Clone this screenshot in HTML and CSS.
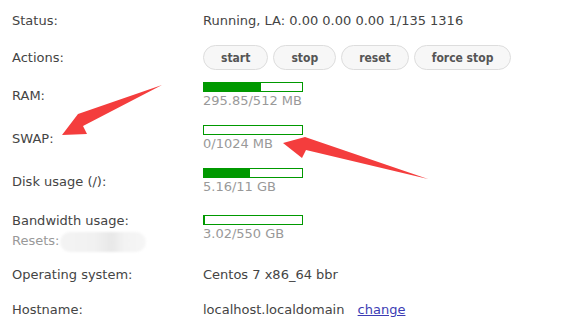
FILE: index.html
```html
<!DOCTYPE html>
<html lang="en">
<head>
    <meta charset="UTF-8">
    <title>VPS Info</title>
    <link rel="stylesheet" href="styles.css">
</head>
<body>
    <div class="info">
        <div class="row">
            <div class="label">Status:</div>
            <div class="value">Running, LA: 0.00 0.00 0.00 1/135 1316</div>
        </div>

        <div class="row">
            <div class="label">Actions:</div>
            <div class="value actions">
                <button>start</button>
                <button>stop</button>
                <button>reset</button>
                <button>force stop</button>
            </div>
        </div>

        <div class="row row-ram">
            <div class="label">RAM:</div>
            <div class="value">
                <div class="bar"><div class="fill" style="width: 58%"></div></div>
                <div class="usage">295.85/512 MB</div>
            </div>
        </div>

        <div class="row">
            <div class="label">SWAP:</div>
            <div class="value">
                <div class="bar"><div class="fill" style="width: 0%"></div></div>
                <div class="usage">0/1024 MB</div>
            </div>
        </div>

        <div class="row">
            <div class="label">Disk usage (/):</div>
            <div class="value">
                <div class="bar"><div class="fill" style="width: 47%"></div></div>
                <div class="usage">5.16/11 GB</div>
            </div>
        </div>

        <div class="row row-bw">
            <div class="label">
                Bandwidth usage:
                <div class="resets">Resets: <span class="blurred"></span></div>
            </div>
            <div class="value">
                <div class="bar"><div class="fill" style="width: 1%"></div></div>
                <div class="usage">3.02/550 GB</div>
            </div>
        </div>

        <div class="row row-os">
            <div class="label">Operating system:</div>
            <div class="value">Centos 7 x86_64 bbr</div>
        </div>

        <div class="row row-host">
            <div class="label">Hostname:</div>
            <div class="value">localhost.localdomain <a href="#" class="change">change</a></div>
        </div>
    </div>

    <!-- annotation arrows -->
    <svg class="arrows" width="576" height="336" viewBox="0 0 576 336">
        <polygon points="162,85 78,114 62,135 87,134 83,126" fill="#f43d3d"/>
        <polygon points="428,179 305,137 283,143 302,158 306,150" fill="#f43d3d"/>
    </svg>
</body>
</html>
```

FILE: styles.css
```css
body {
    margin: 0;
    padding: 13px 12px 0;
    font-family: "DejaVu Sans", Verdana, sans-serif;
    font-size: 13px;
    color: #444;
    background-color: #fff;
}

.info {
    display: flex;
    flex-direction: column;
    gap: 16px;
}

.row {
    display: flex;
    align-items: center;
    line-height: 16px;
}

.row-ram {
    margin-top: -4px;
}

.row-bw {
    margin-top: 2px;
}

.row-bw .value {
    margin-bottom: 6px;
}

.row-os {
    margin-top: 2px;
}

.row-host {
    margin-top: 3px;
}

.label {
    width: 191px;
    flex-shrink: 0;
}

.actions {
    display: flex;
    gap: 5px;
}

button {
    height: 25px;
    padding: 0 17px;
    border: 1px solid #ddd;
    border-radius: 13px;
    background-color: #f7f7f7;
    font-family: "DejaVu Sans Condensed", "DejaVu Sans", sans-serif;
    font-size: 12px;
    font-weight: bold;
    color: #555;
}

.bar {
    width: 98px;
    height: 8px;
    border: 1px solid #009900;
    background-color: #fff;
}

.fill {
    height: 100%;
    background-color: #009900;
}

.usage {
    margin-top: 1px;
    color: #999;
}

.resets {
    margin-top: 4px;
    color: #999;
}

.blurred {
    display: inline-block;
    width: 86px;
    height: 20px;
    margin: -3px 0 -3px -4px;
    vertical-align: middle;
    border-radius: 10px;
    background: linear-gradient(90deg, #f4f4f4 0%, #f1f1f1 40%, #e8e8e8 60%, #f3f3f3 75%, #f6f6f6 100%);
    filter: blur(1px);
}

.change {
    margin-left: 9px;
    color: #3c3cb4;
}

.arrows {
    position: absolute;
    top: 0;
    left: 0;
    pointer-events: none;
}
```
